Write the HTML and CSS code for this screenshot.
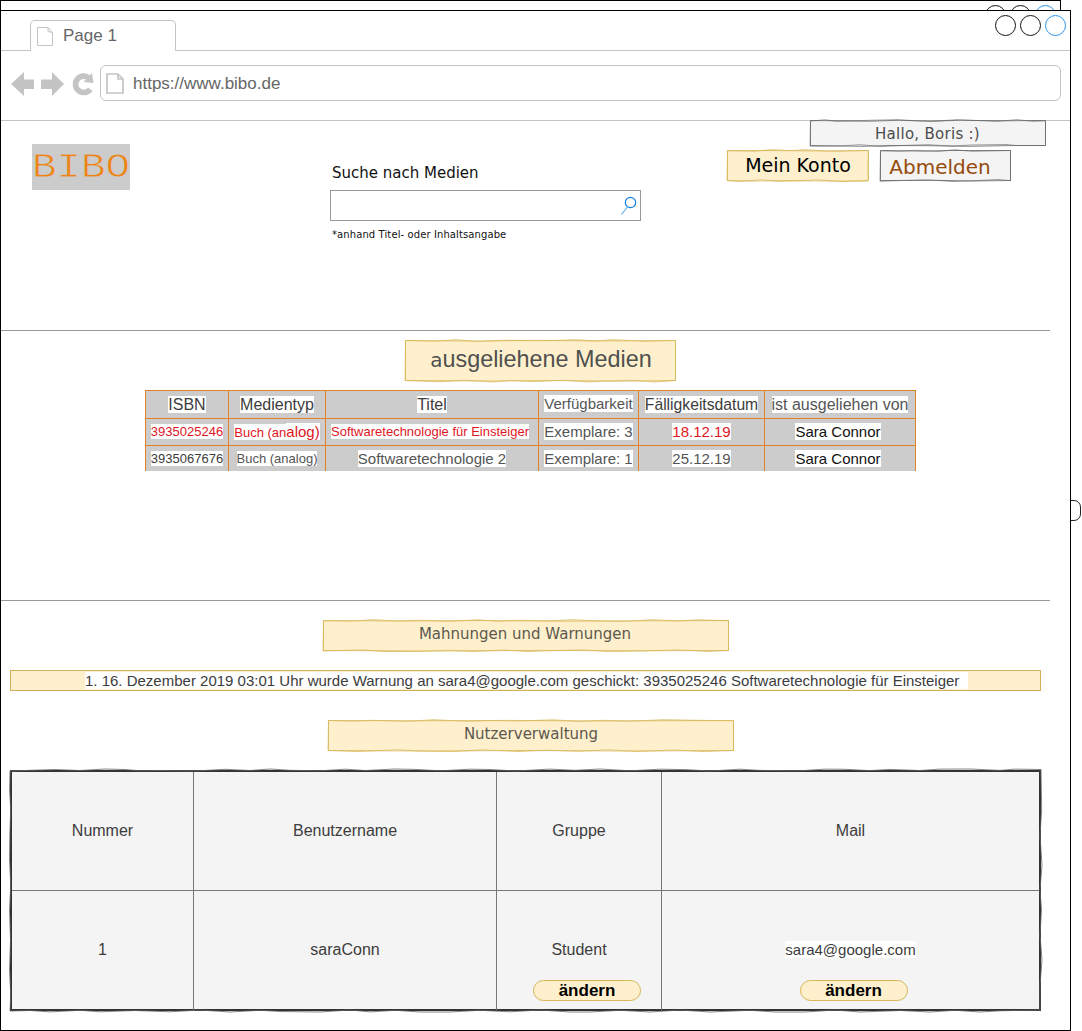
FILE: index.html
```html
<!DOCTYPE html>
<html lang="de">
<head>
<meta charset="utf-8">
<title>BIBO</title>
<link rel="stylesheet" href="styles.css">
</head>
<body>
<div class="back-window"><i class="dot"></i><i class="dot"></i><i class="dot blue"></i></div>
<div class="side-tab"></div>
<div class="window">
  <div class="tabbar">
    <div class="tab">
      <svg width="17" height="20" viewBox="0 0 17 20"><path d="M.5.5H11L15.500 5.500V18.500H.5ZM11 .5V4.500L15.500 5.500" fill="none" stroke="#c4c4c4"/></svg>
      <span>Page 1</span>
    </div>
    <div class="dots"><i class="dot"></i><i class="dot"></i><i class="dot blue"></i></div>
  </div>
  <div class="navbar">
    <svg class="nav-icons" width="85" height="26" viewBox="0 0 85 26" fill="#c4c4c4">
      <path d="M0 13 13 1V8.500H23V18H13V25Z"/>
      <path d="M53 13 41 1V8.500H30V18H41V25Z"/>
      <path d="M79.300 18.200A8.200 8.200 0 1 1 78 7" fill="none" stroke="#c4c4c4" stroke-width="5.600"/>
      <path d="M81 2 82.500 12 72.500 11Z"/>
    </svg>
    <div class="url">
      <svg width="18" height="21" viewBox="0 0 18 21"><path d="M1 1H12L17 6V20H1ZM12 1V6H17" fill="none" stroke="#c4c4c4" stroke-width="1.700"/></svg>
      <span>https://www.bibo.de</span>
    </div>
  </div>
  <header class="top">
    <div class="logo"><span>BIBO</span></div>
    <div class="search">
      <label>Suche nach Medien</label>
      <div class="field"><svg width="16" height="19" viewBox="0 0 16 19" fill="none"><circle cx="9.500" cy="6.500" r="5.200" stroke="#1184e4" stroke-width="1.200"/><path d="M6.500 11 .5 18.500" stroke="#5cb0f2" stroke-width="1.200"/></svg></div>
      <small>*anhand Titel- oder Inhaltsangabe</small>
    </div>
    <div class="account">
      <div class="rough hello">
        <svg class="gray" viewBox="0 0 237 27"><path class="f" d="M.5 1 15-.2 27 1.300 60 .3 87-.3 103 .6 123 1.300 147-.3 187 1.300 207-.3 223 1.300 235.500.8V25.500H206L196 24.500 160 25 142 26.200 118 24.700 92 25.500 70 26.500 50 24.700 30 26 0 26.200Z"/><path class="l" d="M.5.5 30 .8 60 1.200 90 .3 120 1.200 150 .3 190 .8 235.500.5V25.500L205 25.500 160 26.300 118 25.700 80 25.500 52 26.300 .5 25.500Z"/></svg>
        <span>Hallo, Boris :)</span>
      </div>
      <div class="buttons">
        <div class="rough konto">
          <svg class="yellow" viewBox="0 0 142 32"><path class="f" d="M.5.8 28 1.300 43-.3 63 .6 78-.3 105 1.300 141.500.5 141 10V31L115 31.500 90 29.800 72 31 50 31.300 35 29.800 12 31.500 0 30.500Z"/><path class="l" d="M.5.5 50 .6 95 1 141.500.5V30.500L112 31.200 62 30.500 25 31 .5 30.500Z"/></svg>
          <span>Mein Konto</span>
        </div>
        <div class="rough logout">
          <svg class="gray" viewBox="0 0 132 32"><path class="f" d="M.5.8 20 1.200 35 .3 58 1.400 75-.2 92 1.300 130.500 .5V30.700L118 29.500 98 30.500 73 31.500 48 29.800 22 30.500 0 31.300Z"/><path class="l" d="M.5.5 42 1.100 70 .5 130.500.5V30.500L92 31 58 30.400 .5 30.500Z"/></svg>
          <span>Abmelden</span>
        </div>
      </div>
    </div>
  </header>
  <section class="loans">
    <div class="rough heading">
      <svg class="yellow" viewBox="0 0 272 42"><path class="f" d="M.5.5 30 1.200 50-.3 72 1.400 100 .2 130 .8 145 .6 170-.3 190 .8 208-.3 225 .5 240 1.300 270.500.5V40.500L250 42 225 40.300 200 41 183 42 160 40.300 128 41.500 105 40.500 88 42 60 40.200 35 41.800 0 40.500Z"/><path class="l" d="M.5.5 75 1.100 130 .3 190 1 270.500.5V40.500L210 41.200 150 40.500 90 41 .5 40.500Z"/></svg>
      <span><b>a</b>usgeliehene Medien</span>
    </div>
    <div class="media">
      <div><span>ISBN</span></div><div><span>Medientyp</span></div><div><span>Titel</span></div><div class="m mid up"><span>Verfügbarkeit</span></div><div><span class="due">Fälligkeitsdatum</span></div><div class="mid"><span>ist ausgeliehen von</span></div>
      <div class="s red up"><span>3935025246</span></div><div class="s red"><span>Buch (an<b>alog)</b></span></div><div class="s red up left"><span>Softwaretechnologie für Einsteiger</span></div><div class="m mid up"><span>Exemplare: 3</span></div><div class="m red up"><span>18.12.19</span></div><div class="m black up left"><span>Sara Connor</span></div>
      <div class="s"><span>3935067676</span></div><div class="s mid"><span>Buch (analog)</span></div><div class="m mid"><span>Softwaretechnologie 2</span></div><div class="m mid"><span>Exemplare: 1</span></div><div class="m mid"><span>25.12.19</span></div><div class="m black left"><span>Sara Connor</span></div>
    </div>
  </section>
  <section class="admin">
    <div class="rough title warn-title">
      <svg class="yellow" viewBox="0 0 406 32"><path class="f" d="M.5.8 28 1.200 50-.3 75 1 97 .2 125 1.300 155-.2 175 1.300 195 .3 225 .8 250-.3 275 .8 300 1.300 330-.3 355 1 375-.2 405.500.8V30.500L385 31.500 355 29.800 325 30.800 285 31.500 260 29.800 225 30.800 205 31.500 180 30 150 31.500 125 30.200 95 31.500 60 31.500 40 29.800 0 31Z"/><path class="l" d="M.5.5 80 1 160 .5 240 1.200 405.500.5V30.500L310 30.800 220 30.400 110 31 .5 30.500Z"/></svg>
      <span>Mahnungen und Warnungen</span>
    </div>
    <div class="notice"><span>1. 16. Dezember 2019 03:01 Uhr wurde Warnung an sara4@google.com geschickt: 3935025246 Softwaretechnologie für Einsteiger&nbsp;&nbsp;</span></div>
    <div class="rough title user-title">
      <svg class="yellow" viewBox="0 0 406 32"><path class="f" d="M.5.5 25 1.200 45 .3 80 1.300 105-.3 140 1.300 165 .5 190 1 225-.2 250 1.300 275 .3 300 1.200 335-.3 370 .3 405.500.8V30.500L375 31.500 345 30 310 31.500 280 29.800 250 31.300 220 30.200 190 31.500 155 29.800 125 31.500 90 31 70 29.800 30 31.500 0 30.500Z"/><path class="l" d="M.5.5 90 .8 180 .4 260 1 405.500.5V30.500L300 31 200 30.500 100 31 .5 30.500Z"/></svg>
      <span>Nutzerverwaltung</span>
    </div>
    <div class="users">
      <svg viewBox="0 0 1031 241"><path d="M0 1 20 .3 45-.5 70 .5 95-1 115-.5 130 .8 150 .5 185 1 215-.7 240 .5 260-1 280 .3 310 .8 335-.8 355 .5 385-1 405-.6 430 .8 460-.8 480-.5 505 1 540-.9 565 .3 590-1 620 .8 650-.8 675-.4 700 1 730-.8 750 .4 790 .8 815-.9 835-.7 860 .6 880-.6 910 .5 930-.9 960-1 990 .4 1005-.9 1031-.5 1031.700 40 1030 65 1032 95 1030 120 1031.500 140 1030 165 1032 190 1030 215 1030 240 990 240.800 970 242 945 240.300 920 242 890 240.500 850 242 825 240 795 242 765 242 740 240.300 700 242 670 240 640 242 610 240.300 580 242 560 242 530 240 500 241.800 470 240.300 440 242 410 242 385 240.300 360 241.900 340 240 310 242 270 241.500 250 240.300 220 242 190 240 160 241.800 125 240.500 90 241.800 70 240.300 40 241.900 20 240.500 0 241 .8 225-.5 200 .5 170-.5 140 .8 115-.5 90-.2 65 .7 40-.4 20Z"/></svg>
      <div>Nummer</div><div>Benutzername</div><div>Gruppe</div><div>Mail</div>
      <div>1</div><div>saraConn</div><div>Student<button class="b1">ändern</button></div><div><span>sara4@google.com</span><button class="b2">ändern</button></div>
    </div>
  </section>
</div>
</body>
</html>
```
FILE: styles.css
```css
* { box-sizing: border-box; }
body { margin: 0; width: 1082px; height: 1031px; padding-top: 10px; overflow: hidden; position: relative; background: #fff; color: #3c3c3c; font: 16px "Liberation Sans", Arial, sans-serif; }
.dot { width: 21px; height: 21px; border: 1.300px solid #111; border-radius: 50%; }
.dot.blue { border-color: #2b95ee; }
.back-window { position: absolute; left: 0; top: 0; width: 1061px; height: 60px; border: 1px solid #000; padding: 4px 4px 0 0; display: flex; justify-content: flex-end; gap: 4px; }
.side-tab { position: absolute; left: 1060px; top: 500px; width: 21px; height: 21px; border: 1px solid #222; border-radius: 7px; }
.window { position: relative; width: 1071px; height: 1021px; border: 1px solid #000; background: #fff; }
.tabbar { height: 40px; border-bottom: 1px solid #c4c4c4; display: flex; justify-content: space-between; padding: 4px 4px 0 29px; }
.tab { margin-top: 5px; width: 146px; height: 31px; border: 1px solid #c4c4c4; border-bottom: 0; border-radius: 5px 5px 0 0; background: #fff; display: flex; padding: 6px 0 0 6px; gap: 9px; color: #666; font-size: 17px; line-height: 18px; }
.dots { display: flex; gap: 4px; }
.navbar { height: 70px; border-bottom: 1px solid #c4c4c4; display: flex; align-items: flex-start; padding: 14px 0 0 10px; color: #666; font-size: 17px; }
.nav-icons { margin: 6px 4px 0 0; }
.url { width: 961px; height: 36px; border: 1px solid #c4c4c4; border-radius: 6px; display: flex; align-items: center; padding-left: 5px; gap: 9px; }
.url span { padding-top: 1px; }
.top { width: 1049px; height: 210px; border-bottom: 1px solid #999; display: flex; align-items: flex-start; }
.logo { flex: none; margin: 23px 200px 0 31px; width: 98px; height: 46px; background: #ccc; color: #f08313; font: 35px/46px "Liberation Mono", "Courier New", monospace; }
.logo span { display: inline-block; padding-top: 1px; transform: scaleX(1.167); transform-origin: left; -webkit-text-stroke: .8px #ccc; }
.search { width: 311px; padding-top: 42px; color: #111; font-family: "DejaVu Sans", Verdana, sans-serif; }
.search label { display: block; margin-left: 2px; font-size: 15px; line-height: 20px; }
.field { margin-top: 7px; height: 31px; border: 1px solid #999; display: flex; justify-content: flex-end; padding: 5px 3px 0 0; }
.search small { display: block; margin: 7px 0 0 2px; font-size: 10px; line-height: 14px; letter-spacing: .1px; }
.account { flex: none; margin: -1px 3px 0 86px; width: 320px; font-family: "DejaVu Sans", Verdana, sans-serif; }
.rough { position: relative; display: flex; justify-content: center; align-items: center; }
.rough svg { position: absolute; inset: 0; width: 100%; height: 100%; overflow: visible; }
.rough span { position: relative; white-space: nowrap; }
.gray .f { fill: #f4f4f4; stroke: #777; stroke-width: .7; }
.gray .l { fill: none; stroke: #666; stroke-width: .8; }
.yellow .f { fill: #fff0cd; stroke: #d6b656; stroke-width: .7; }
.yellow .l { fill: none; stroke: #d6b656; stroke-width: .8; }
.hello { width: 237px; height: 27px; margin-left: 83px; font-size: 15px; letter-spacing: .28px; color: #4c4c4c; }
.hello span { left: -1px; }
.buttons { display: flex; gap: 11px; margin-top: 3px; }
.konto { width: 142px; height: 32px; font-size: 19px; color: #000; }
.konto span { top: -1px; }
.logout { width: 132px; height: 32px; font-size: 20px; color: #964b0c; padding-right: 12px; }
.logout span { top: 1px; }
.loans { width: 1049px; height: 270px; padding-top: 9px; border-bottom: 1px solid #999; }
.heading { width: 272px; height: 42px; margin-left: 404px; font-size: 23.400px; color: #505050; }
.heading b { font: 20px "DejaVu Sans", Verdana, sans-serif; }
.heading span { top: -2px; }
.media { width: 771px; margin: 8px 0 0 144px; display: grid; grid-template-columns: 83px 97px 213px 100px 126px 151px; grid-template-rows: 28px 27px 26px; background: #ccc; border-right: 1px solid #e08225; white-space: nowrap; }
.media > div { border: solid #e08225; border-width: 1px 0 0 1px; display: flex; justify-content: center; align-items: center; }
.media span { background: #fff; line-height: 17px; }
.media .mid { color: #555; }
.media .up { padding-bottom: 2px; }
.media .left { padding-right: 4px; }
.media .m { font-size: 15px; }
.media .s { font-size: 13px; }
.media .s span { line-height: 15px; }
.media .s b { font-size: 15px; font-weight: 400; background: #fff; }
.media .red { color: #e0161f; }
.media .black { color: #111; }
.media .due { font-size: 15.700px; }
.admin { padding: 19px 0 0 9px; }
.title { width: 406px; height: 32px; font: 15px "DejaVu Sans", Verdana, sans-serif; color: #5c584e; }
.title span { top: -2px; left: -1px; }
.warn-title { margin-left: 313px; }
.notice { width: 1031px; height: 21px; margin: 18px 0 29px; border: 1px solid #d0b05a; background: #fff0cd; display: flex; align-items: center; padding-left: 74px; font-size: 15px; white-space: nowrap; }
.notice span { background: #fff; line-height: 17px; }
.user-title { margin-left: 318px; }
.user-title span { left: 0; }
.users { position: relative; width: 1031px; height: 241px; margin-top: 18px; display: grid; grid-template-columns: 182px 303px 165px 377px; grid-template-rows: 119px 119px; border: 2px solid #333; background: #f4f4f4; }
.users > svg { position: absolute; left: -2px; top: -2px; width: 1031px; height: 241px; overflow: visible; fill: none; stroke: #666; stroke-width: .8; }
.users > div { border: solid #777; border-width: 0 1px 1px 0; display: flex; flex-direction: column; align-items: center; padding-top: 50px; line-height: 18px; }
.users > div:nth-of-type(4n) { border-right: 0; }
.users > div:nth-of-type(n+5) { border-bottom: 0; }
.users span { background: #fff; font-size: 15px; line-height: 17px; margin-bottom: 1px; }
.users button { width: 108px; height: 21px; margin-top: 21px; padding: 0; border: 1px solid #d6b656; border-radius: 11px; background: #fff0cd; color: #000; font: bold 17px/19px "Liberation Sans", Arial, sans-serif; position: relative; }
.b1 { left: 8px; }
.b2 { left: 3px; }
```
